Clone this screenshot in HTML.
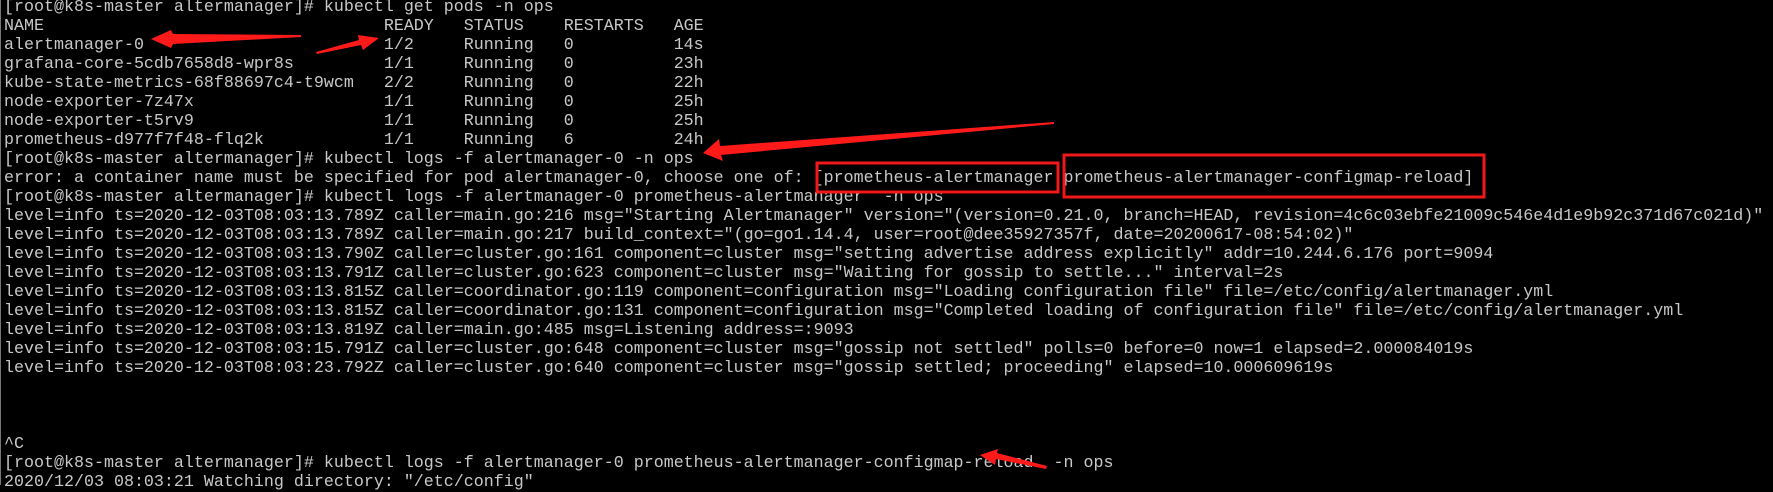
<!DOCTYPE html>
<html><head><meta charset="utf-8">
<style>
html,body{margin:0;padding:0;background:#000;}
body{width:1773px;height:485px;overflow:hidden;position:relative;border-left:1px solid #777;box-sizing:border-box;}
pre{position:absolute;left:3px;top:-2px;margin:0;font-family:"Liberation Mono",monospace;font-size:16.67px;line-height:19px;color:#c8c8c8;white-space:pre;}
svg{position:absolute;left:0;top:0;}
</style></head><body>
<pre>[root@k8s-master altermanager]# kubectl get pods -n ops
NAME                                  READY   STATUS    RESTARTS   AGE
alertmanager-0                        1/2     Running   0          14s
grafana-core-5cdb7658d8-wpr8s         1/1     Running   0          23h
kube-state-metrics-68f88697c4-t9wcm   2/2     Running   0          22h
node-exporter-7z47x                   1/1     Running   0          25h
node-exporter-t5rv9                   1/1     Running   0          25h
prometheus-d977f7f48-flq2k            1/1     Running   6          24h
[root@k8s-master altermanager]# kubectl logs -f alertmanager-0 -n ops
error: a container name must be specified for pod alertmanager-0, choose one of: [prometheus-alertmanager prometheus-alertmanager-configmap-reload]
[root@k8s-master altermanager]# kubectl logs -f alertmanager-0 prometheus-alertmanager  -n ops
level=info ts=2020-12-03T08:03:13.789Z caller=main.go:216 msg="Starting Alertmanager" version="(version=0.21.0, branch=HEAD, revision=4c6c03ebfe21009c546e4d1e9b92c371d67c021d)"
level=info ts=2020-12-03T08:03:13.789Z caller=main.go:217 build_context="(go=go1.14.4, user=root@dee35927357f, date=20200617-08:54:02)"
level=info ts=2020-12-03T08:03:13.790Z caller=cluster.go:161 component=cluster msg="setting advertise address explicitly" addr=10.244.6.176 port=9094
level=info ts=2020-12-03T08:03:13.791Z caller=cluster.go:623 component=cluster msg="Waiting for gossip to settle..." interval=2s
level=info ts=2020-12-03T08:03:13.815Z caller=coordinator.go:119 component=configuration msg="Loading configuration file" file=/etc/config/alertmanager.yml
level=info ts=2020-12-03T08:03:13.815Z caller=coordinator.go:131 component=configuration msg="Completed loading of configuration file" file=/etc/config/alertmanager.yml
level=info ts=2020-12-03T08:03:13.819Z caller=main.go:485 msg=Listening address=:9093
level=info ts=2020-12-03T08:03:15.791Z caller=cluster.go:648 component=cluster msg="gossip not settled" polls=0 before=0 now=1 elapsed=2.000084019s
level=info ts=2020-12-03T08:03:23.792Z caller=cluster.go:640 component=cluster msg="gossip settled; proceeding" elapsed=10.000609619s



^C
[root@k8s-master altermanager]# kubectl logs -f alertmanager-0 prometheus-alertmanager-configmap-reload  -n ops
2020/12/03 08:03:21 Watching directory: "/etc/config"</pre>
<svg width="1773" height="485" viewBox="0 0 1773 485">
<rect x="816" y="163" width="241" height="29" fill="none" stroke="#f01818" stroke-width="3"/>
<rect x="1063" y="155" width="420" height="42" fill="none" stroke="#f01818" stroke-width="3"/>
<polygon fill="#ff1a1a" points="300,35 300,37 172,44 170,48 150,39 170,30 172,34"/>
<polygon fill="#ff1a1a" points="315,52 316,54 360,45 362,50 378,38 357,35 358,40"/>
<polygon fill="#ff1a1a" points="1053,122 1053,124 720,155 722,161 702,153 718,139 719,146"/>
<polygon fill="#ff1a1a" points="1046,466 1045,469 995,459 994,465 979,455 997,449 996,453"/>
</svg>
</body></html>
